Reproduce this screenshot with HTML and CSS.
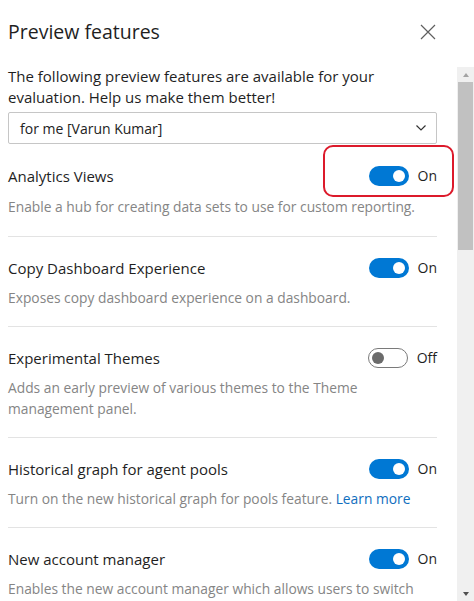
FILE: index.html
```html
<!DOCTYPE html>
<html lang="en">
<head>
<meta charset="utf-8">
<title>Preview features</title>
<link rel="stylesheet" href="styles.css">
</head>
<body>
<div class="panel">
  <header class="head">
    <h1 class="head-title">Preview features</h1>
    <button class="close" aria-label="Close">
      <svg width="16" height="16" viewBox="0 0 16 16"><path d="M1 1 L15 15 M15 1 L1 15" stroke="#5f5f5f" stroke-width="1.2" fill="none"/></svg>
    </button>
  </header>
  <div class="scroller">
    <div class="content">
      <p class="intro">The following preview features are available for your evaluation. Help us make them better!</p>
      <div class="select">
        <span>for me [Varun Kumar]</span>
        <svg width="12" height="8" viewBox="0 0 12 8"><path d="M1.5 1.5 L6 6 L10.5 1.5" stroke="#333" stroke-width="1.2" fill="none"/></svg>
      </div>
      <ul class="features">
        <li class="feature">
          <div class="feature-row">
            <span class="feature-name">Analytics Views</span>
            <div class="toggle-group">
              <span class="toggle on"><span class="knob"></span></span>
              <span class="toggle-label">On</span>
              <span class="highlight"></span>
            </div>
          </div>
          <p class="feature-desc">Enable a hub for creating data sets to use for custom reporting.</p>
        </li>
        <li class="feature">
          <div class="feature-row">
            <span class="feature-name">Copy Dashboard Experience</span>
            <div class="toggle-group">
              <span class="toggle on"><span class="knob"></span></span>
              <span class="toggle-label">On</span>
            </div>
          </div>
          <p class="feature-desc">Exposes copy dashboard experience on a dashboard.</p>
        </li>
        <li class="feature">
          <div class="feature-row">
            <span class="feature-name">Experimental Themes</span>
            <div class="toggle-group">
              <span class="toggle off"><span class="knob"></span></span>
              <span class="toggle-label">Off</span>
            </div>
          </div>
          <p class="feature-desc">Adds an early preview of various themes to the Theme<br>management panel.</p>
        </li>
        <li class="feature">
          <div class="feature-row">
            <span class="feature-name">Historical graph for agent pools</span>
            <div class="toggle-group">
              <span class="toggle on"><span class="knob"></span></span>
              <span class="toggle-label">On</span>
            </div>
          </div>
          <p class="feature-desc">Turn on the new historical graph for pools feature. <a class="link" href="#">Learn more</a></p>
        </li>
        <li class="feature">
          <div class="feature-row">
            <span class="feature-name">New account manager</span>
            <div class="toggle-group">
              <span class="toggle on"><span class="knob"></span></span>
              <span class="toggle-label">On</span>
            </div>
          </div>
          <p class="feature-desc">Enables the new account manager which allows users to switch</p>
        </li>
      </ul>
    </div>
    <div class="scrollbar">
      <div class="sb-btn"><span class="tri up"></span></div>
      <div class="sb-thumb"></div>
      <div class="sb-track"></div>
      <div class="sb-btn"><span class="tri down"></span></div>
    </div>
  </div>
</div>
</body>
</html>
```

FILE: styles.css
```css
html, body {
  margin: 0;
  padding: 0;
  height: 100%;
  overflow: hidden;
  background: #ffffff;
}

body {
  font-family: "Open Sans", "Noto Sans", sans-serif;
  color: #222222;
}

.panel {
  height: 100vh;
  display: flex;
  flex-direction: column;
}

.head {
  height: 66px;
  flex: none;
  display: flex;
  align-items: flex-start;
  justify-content: space-between;
  padding: 18px 38px 0 8px;
  box-sizing: border-box;
}

.head-title {
  margin: 0;
  font-size: 19.5px;
  line-height: 28px;
  font-weight: 400;
  color: #1f1f1f;
}

.close {
  margin-top: 6px;
  padding: 0;
  border: 0;
  background: none;
  width: 16px;
  height: 16px;
  display: flex;
}

.scroller {
  flex: 1;
  min-height: 0;
  display: flex;
  overflow: hidden;
}

.content {
  flex: 1;
  min-width: 0;
  padding: 0 20px 0 8px;
}

.intro {
  margin: 0;
  font-size: 15px;
  line-height: 21px;
  color: #1f1f1f;
}

.select {
  margin-top: 4px;
  height: 32px;
  box-sizing: border-box;
  border: 1px solid #c6c6c6;
  border-radius: 2px;
  display: flex;
  align-items: center;
  justify-content: space-between;
  padding: 0 9px 0 11px;
  font-size: 14px;
  color: #222;
}

.features {
  list-style: none;
  margin: 1px 0 0;
  padding: 0;
}

.feature {
  padding: 19px 0 18px;
  border-bottom: 1px solid #e3e3e3;
}

.feature:first-child {
  padding-bottom: 19px;
}

.feature-row {
  display: flex;
  align-items: center;
  justify-content: space-between;
  height: 24px;
}

.feature-name {
  font-size: 15px;
  line-height: 24px;
  color: #1f1f1f;
}

.toggle-group {
  position: relative;
  display: flex;
  align-items: center;
  gap: 9px;
  height: 24px;
}

.toggle {
  width: 40px;
  height: 20px;
  box-sizing: border-box;
  border-radius: 10px;
  display: flex;
  align-items: center;
  padding: 0 4px;
}

.toggle.on {
  background: #0078d4;
  justify-content: flex-end;
}

.toggle.off {
  background: #ffffff;
  border: 1px solid #7a7a7a;
  justify-content: flex-start;
  padding: 0 3px;
}

.knob {
  width: 12px;
  height: 12px;
  border-radius: 50%;
}

.toggle.on .knob { background: #ffffff; }
.toggle.off .knob { background: #6b6b6b; }

.toggle-label {
  font-size: 14px;
  line-height: 24px;
  color: #1f1f1f;
  min-width: 19px;
}

.highlight {
  position: absolute;
  left: -46px;
  right: -17px;
  top: -19px;
  bottom: -9px;
  border: 2px solid #dc1a2b;
  border-radius: 10px;
}

.feature-desc {
  margin: 7px 0 0;
  font-size: 13.8px;
  line-height: 21px;
  color: #858585;
}

.feature:first-child .feature-desc {
  margin-top: 8px;
}

.link {
  color: #106ebe;
  text-decoration: none;
}

.scrollbar {
  width: 17px;
  flex: none;
  display: flex;
  flex-direction: column;
  background: #f0f0f0;
  margin-top: 1px;
}

.sb-btn {
  height: 15px;
  display: flex;
  align-items: center;
  justify-content: center;
}

.sb-thumb {
  height: 168px;
  margin: 0 1px;
  background: #c1c1c1;
}

.sb-track {
  flex: 1;
}

.tri {
  width: 0;
  height: 0;
  border-left: 3.5px solid transparent;
  border-right: 3.5px solid transparent;
}

.tri.up { border-bottom: 4px solid #a3a3a3; }
.tri.down { border-top: 4px solid #505050; }
```
